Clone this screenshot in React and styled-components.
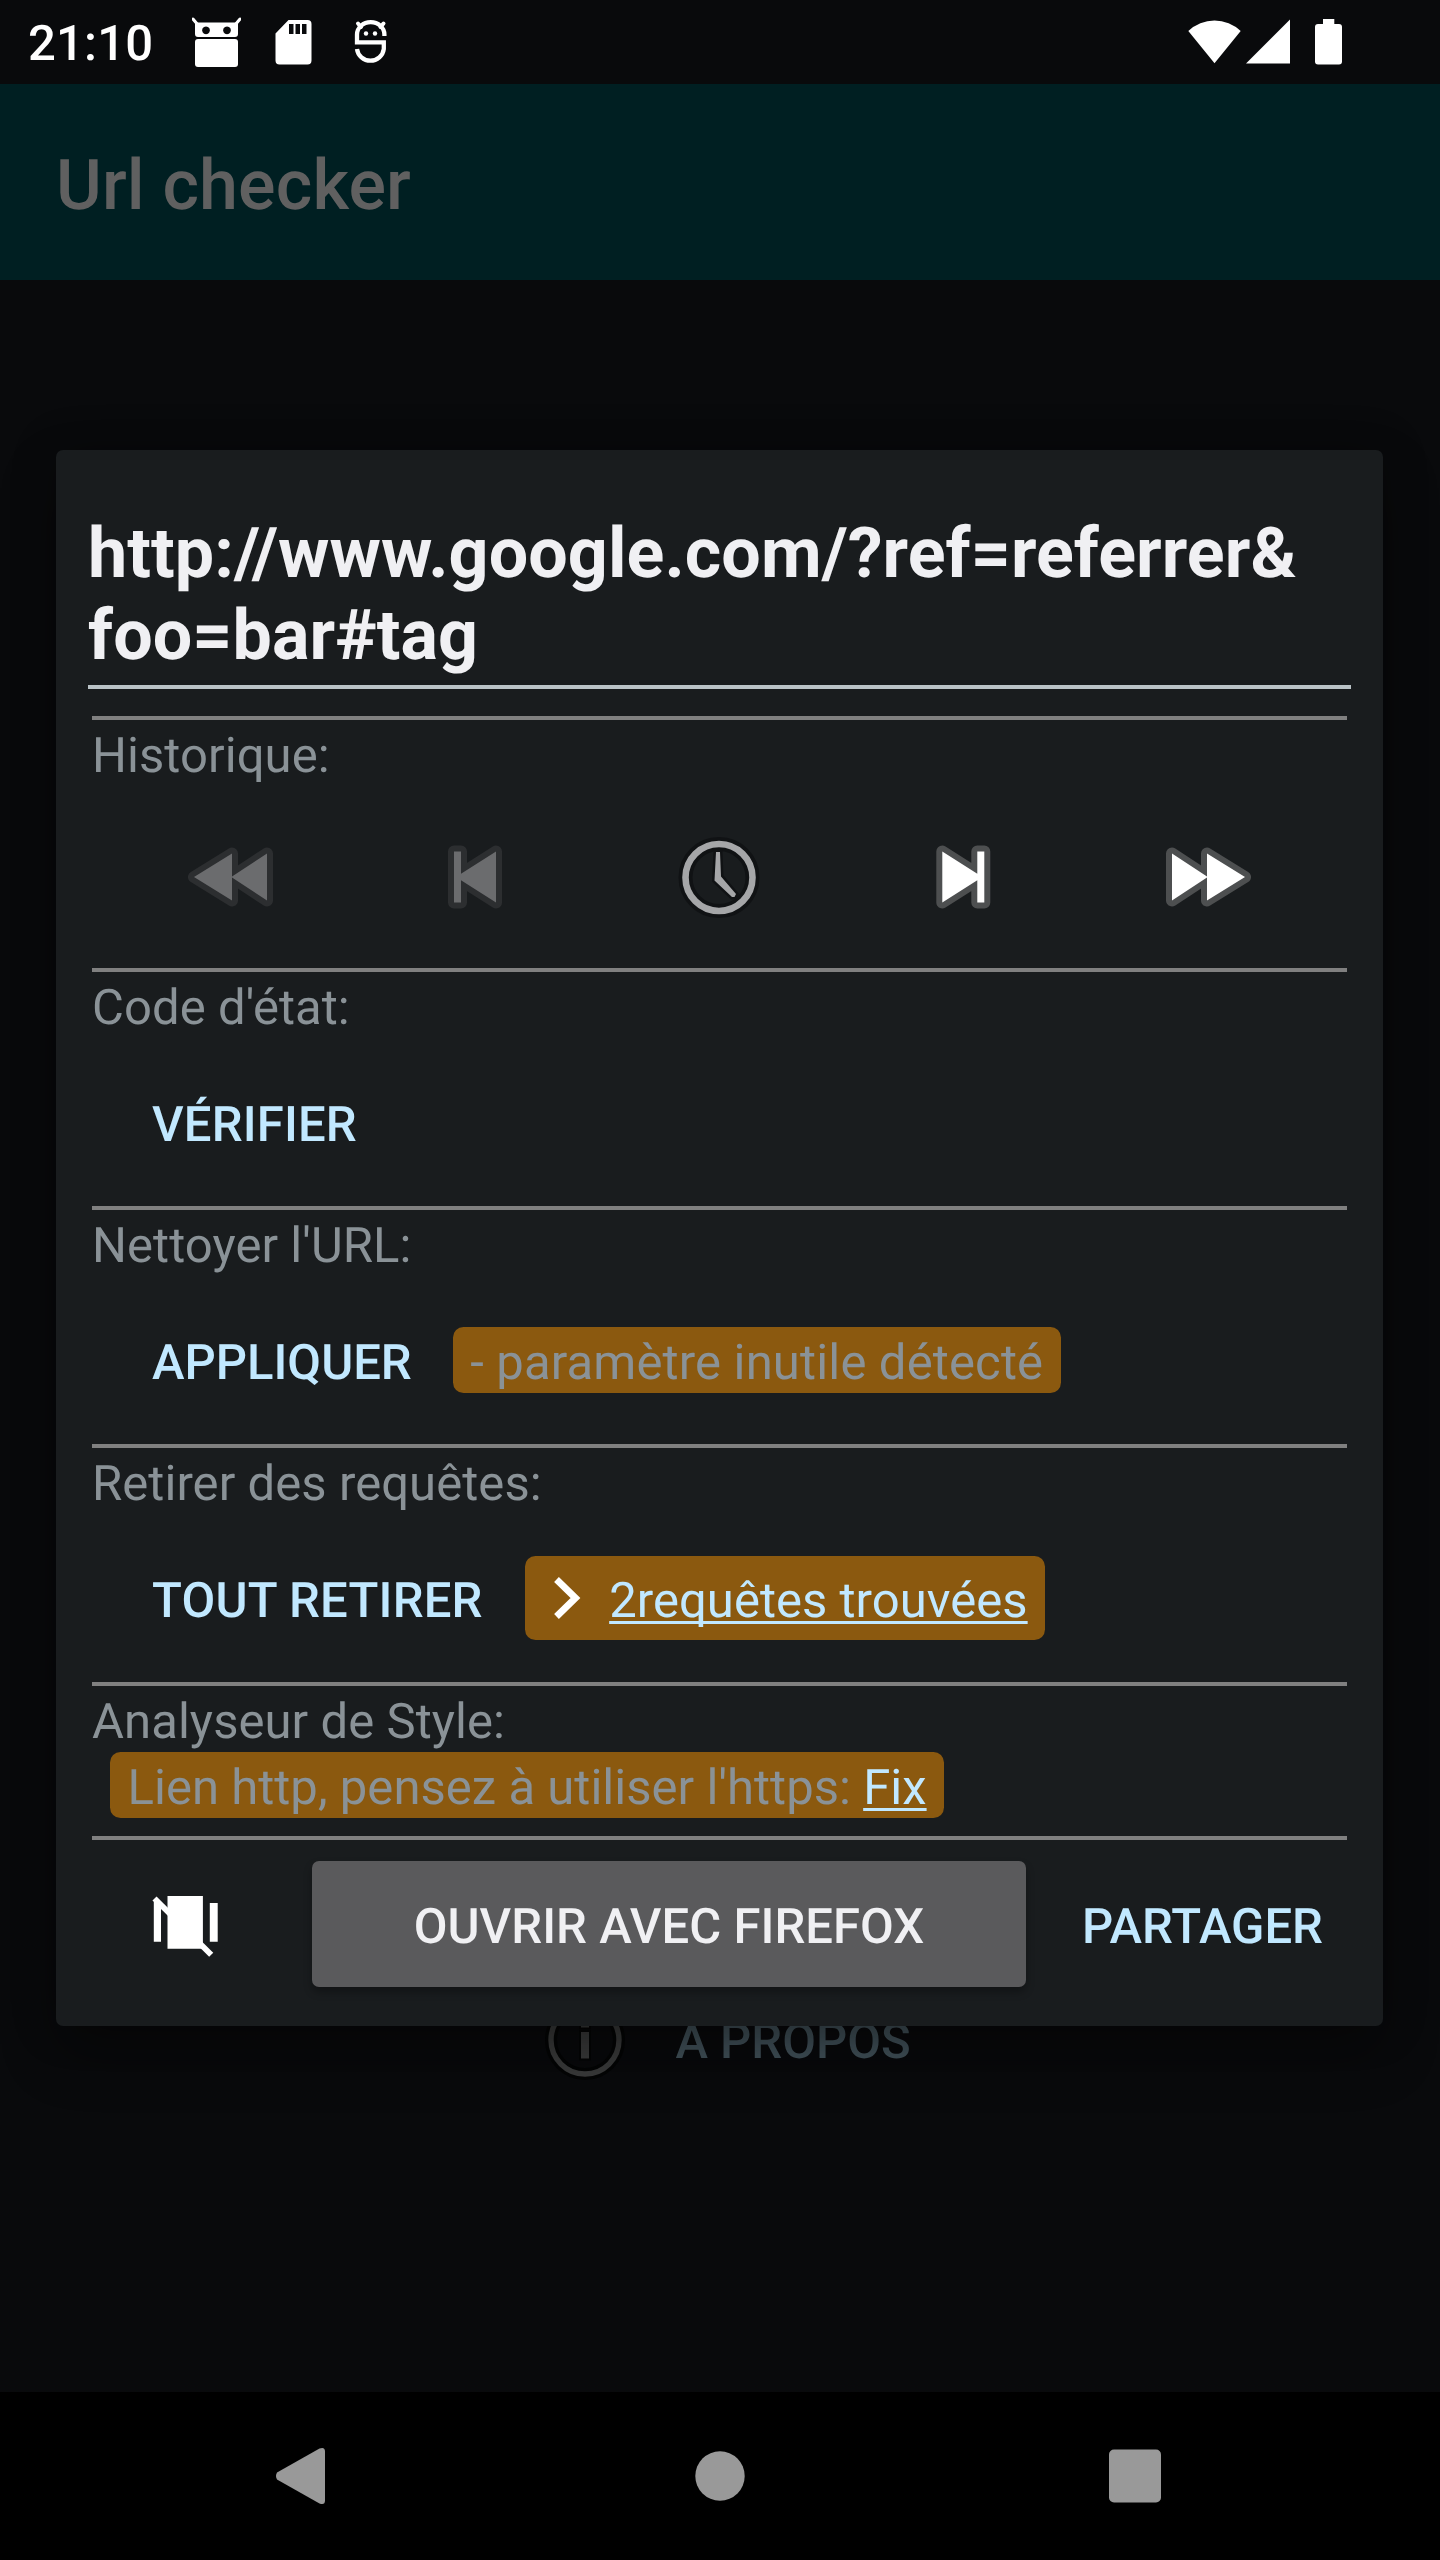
import React from "react";
import styled, { createGlobalStyle } from "styled-components";

const GlobalStyle = createGlobalStyle`
  * { box-sizing: border-box; }
  html, body { margin: 0; padding: 0; background: #090a0c; }
  body {
    font-family: Roboto, "Liberation Sans", sans-serif;
    font-size: 49px;
    line-height: 72px;
    text-rendering: geometricPrecision;
  }
`;

const Screen = styled.div`
  position: relative;
  display: flex;
  flex-direction: column;
  width: 1440px;
  height: 2560px;
  overflow: hidden;
  background: #090a0c;
`;

const StatusBar = styled.header`
  display: flex;
  align-items: center;
  justify-content: space-between;
  height: 84px;
  padding: 0 98px 0 28px;
  color: #fff;
`;

const StatusGroup = styled.div`
  display: flex;
  align-items: center;
`;

const Clock = styled.span`
  width: 164px;
  font-weight: 500;
  letter-spacing: 0.2px;
  line-height: 84px;
  padding-top: 4px;
`;

const Icon = styled.svg`
  display: block;
  flex: none;
  margin-left: ${(p) => p.$gap || 0}px;
`;

const AppBar = styled.div`
  display: flex;
  align-items: center;
  height: 196px;
  padding: 7px 56px 0;
  background: #001f22;
  color: #606060;
  font-size: 70px;
  font-weight: 500;
  letter-spacing: 0.15px;
`;

const Main = styled.main`
  display: flex;
  flex: 1;
  flex-direction: column;
  align-items: center;
  padding: 1718px 0 0 14px;
`;

const AboutRow = styled.div`
  display: flex;
  align-items: center;
  gap: 48px;
  height: 84px;
  color: #42525a;
  font-weight: 500;
`;

const AboutText = styled.span`
  padding-top: 4px;
`;

const NavBar = styled.nav`
  display: flex;
  align-items: center;
  justify-content: space-between;
  height: 168px;
  padding: 0 279px 0 276px;
  background: #000;
`;

const Dialog = styled.section`
  position: absolute;
  top: 450px;
  left: 56px;
  width: 1327px;
  height: 1576px;
  padding: 63px 36px 0;
  border-radius: 7px;
  background: #191c1e;
  box-shadow: 0 28px 56px rgba(0, 0, 0, 0.32), 0 0 44px rgba(0, 0, 0, 0.25);
`;

const UrlField = styled.div`
  height: 176px;
  margin: 0 -4px 27px;
  border-bottom: 4px solid #bac3c7;
  color: #f0f0f3;
  font-size: 70px;
  font-weight: 700;
  letter-spacing: 0.08px;
  line-height: 82px;
`;

const Module = styled.div`
  border-top: 4px solid #808080;
`;

const Label = styled.div`
  height: 66px;
  color: #8a9297;
  letter-spacing: 0.07px;
`;

const Row = styled.div`
  display: flex;
  align-items: center;
  height: ${(p) => p.$height || 168}px;
  padding: 0 ${(p) => p.$side || 0}px;
`;

const HistoryCell = styled.div`
  display: flex;
  flex: 1;
  align-items: center;
  justify-content: center;
`;

const TextButton = styled.button`
  height: 66px;
  padding: 0;
  margin: 0 ${(p) => p.$right || 0}px 0 ${(p) => p.$left || 0}px;
  border: 0;
  background: none;
  color: #c1e8ff;
  font: 500 49px/72px Roboto, "Liberation Sans", sans-serif;
  letter-spacing: ${(p) => p.$tracking || 0}px;
  text-rendering: inherit;
  white-space: nowrap;
`;

const Badge = styled.div`
  display: flex;
  align-items: center;
  width: max-content;
  height: ${(p) => p.$height || 66}px;
  margin-left: ${(p) => p.$left || 0}px;
  padding: 0 17.5px;
  border-radius: 10.5px;
  background: #8b590f;
  color: #8a9297;
  letter-spacing: ${(p) => p.$tracking || 0}px;
  white-space: pre;
`;

const BadgeText = styled.span`
  height: 66px;
`;

const Link = styled.a`
  color: #c1e8ff;
  text-decoration: underline;
  text-decoration-thickness: 3px;
  text-underline-offset: 4px;
  text-decoration-skip-ink: none;
`;

const AnalyserBody = styled.div`
  height: 84px;
`;

const OpenButton = styled.button`
  width: 714px;
  height: 126px;
  margin: 0 56px 0 94px;
  padding: 6px 0 0;
  border: 0;
  border-radius: 7px;
  background: #5a5a5c;
  box-shadow: 0 5px 9px rgba(0, 0, 0, 0.3);
  color: #f0f0f3;
  font: 500 49px/70px Roboto, "Liberation Sans", sans-serif;
  letter-spacing: 0.05px;
  text-rendering: inherit;
`;

const tones = {
  on: { fill: "#ffffff", edge: "#4d4f50" },
  off: { fill: "#6b6c6e", edge: "#2c2e30" },
};

function MediaIcon({ d, width, tone }) {
  return (
    <Icon width={width} height="66" viewBox={`${-width / 2} -33 ${width} 66`}>
      <path d={d} fill={tone.edge} stroke={tone.edge} strokeWidth="12" strokeLinejoin="round" />
      <path d={d} fill={tone.fill} />
    </Icon>
  );
}

const DOUBLE_NEXT = "M-36 -23.5L-1 -.6V-23.5L37 0L-1 23.5V.6L-36 23.5Z";
const DOUBLE_PREV = "M36 -23.5L1 -.6V-23.5L-37 0L1 23.5V.6L36 23.5Z";
const NEXT = "M-21.7 -25.5L13.3 -3.3V-25.5H20.3V25.5H13.3V3.3L-21.7 25.5Z";
const PREV = "M21 -25.5L-14 -3.3V-25.5H-21V25.5H-14V3.3L21 25.5Z";

function HistoryClock() {
  return (
    <Icon width="84" height="84" viewBox="-41 -42.5 84 84">
      <circle r="33.5" fill="none" stroke="#101214" strokeWidth="14" />
      <circle r="33.5" fill="none" stroke="#a5a6a8" strokeWidth="6.6" />
      <path
        d="M-3 -25.5H1L2 -1L17 16.5L15.5 19.5H13L-4.5 3Z"
        fill="#a5a6a8"
        stroke="#101214"
        strokeWidth="5"
        paintOrder="stroke"
      />
    </Icon>
  );
}

export default function App() {
  return (
    <>
      <GlobalStyle />
      <Screen>
        <StatusBar>
          <StatusGroup>
            <Clock>21:10</Clock>
            <Icon width="49" height="84" viewBox="192 0 49 84">
              <path d="M193 19L198 25M240 19L235 25" stroke="#fff" strokeWidth="3" strokeLinecap="round" />
              <path
                fill="#fff"
                fillRule="evenodd"
                d="M195 22.5H238V34Q238 37 235 37H198Q195 37 195 34ZM206 26.4a3.9 3.9 0 1 0 .01 0ZM227 26.4a3.9 3.9 0 1 0 .01 0Z"
              />
              <rect x="195" y="39" width="43" height="28" rx="3" fill="#fff" />
            </Icon>
            <Icon $gap={34} width="37" height="84" viewBox="275 0 37 84">
              <path
                fill="#fff"
                fillRule="evenodd"
                d="M288.5 20H307.5Q311.5 20 311.5 24V60.5Q311.5 64.5 307.5 64.5H279.5Q275.5 64.5 275.5 60.5V33.5ZM289 24V34H293.5V24ZM295.5 24V34H300V24ZM302 24V34H306.5V24Z"
              />
            </Icon>
            <Icon $gap={41} width="35" height="84" viewBox="353 0 35 84">
              <path
                d="M384.4 36V34.5A13.7 12.4 0 0 0 357 34.5V42.3H383.8V49A13.5 13.3 0 0 1 357 49"
                fill="none"
                stroke="#fff"
                strokeWidth="4.3"
              />
              <path d="M358 23.5L361 27M383.5 23.5L380.5 27" stroke="#fff" strokeWidth="4" strokeLinecap="round" />
              <circle cx="366" cy="33.5" r="2.2" fill="#fff" />
              <circle cx="375" cy="33.5" r="2.2" fill="#fff" />
            </Icon>
          </StatusGroup>
          <StatusGroup>
            <Icon width="53" height="84" viewBox="1188 0 53 84" fill="#fff">
              <path d="M1214.5 63.3L1188.3 31A38 38 0 0 1 1240.7 31Z" />
            </Icon>
            <Icon $gap={5} width="44" height="84" viewBox="1246 0 44 84" fill="#fff">
              <path d="M1246 63.5L1290 19.5V63.5Z" />
            </Icon>
            <Icon $gap={25} width="27" height="84" viewBox="1315 0 27 84" fill="#fff">
              <rect x="1315" y="24" width="27" height="40.5" rx="3" />
              <rect x="1323" y="19" width="11.3" height="6" />
            </Icon>
          </StatusGroup>
        </StatusBar>
        <AppBar>Url checker</AppBar>
        <Main>
          <AboutRow>
            <Icon width="84" height="84" viewBox="-42 -42 84 84">
              <circle r="34" fill="none" stroke="#040505" strokeWidth="12" />
              <circle r="34" fill="none" stroke="#3a3b3b" strokeWidth="5.4" />
              <path d="M-4 -8H4V18.5H-4ZM-4 -20H4V-12.5H-4Z" fill="#3a3b3b" stroke="#040505" strokeWidth="4" paintOrder="stroke" />
            </Icon>
            <AboutText>À PROPOS</AboutText>
          </AboutRow>
        </Main>
        <NavBar>
          <Icon width="55" height="58" viewBox="276 2447 55 58">
            <path d="M277 2472.5L319.5 2448.5Q325 2446.5 325 2451.5V2500.5Q325 2505.5 319.5 2503.5L277 2479.5Q275 2476 277 2472.5Z" fill="#999" />
          </Icon>
          <Icon width="50" height="50" viewBox="-25 -25 50 50">
            <circle r="24.7" fill="#999" />
          </Icon>
          <Icon width="52" height="54" viewBox="0 0 52 54">
            <rect y="0.5" width="52" height="53" rx="5" fill="#999" />
          </Icon>
        </NavBar>

        <Dialog>
          <UrlField>
            http://www.google.com/?ref=referrer&amp;
            <br />
            foo=bar#tag
          </UrlField>

          <Module>
            <Label>Historique:</Label>
            <Row $height={182} $side={17}>
              <HistoryCell><MediaIcon d={DOUBLE_PREV} width={86} tone={tones.off} /></HistoryCell>
              <HistoryCell><MediaIcon d={PREV} width={56} tone={tones.off} /></HistoryCell>
              <HistoryCell><HistoryClock /></HistoryCell>
              <HistoryCell><MediaIcon d={NEXT} width={56} tone={tones.on} /></HistoryCell>
              <HistoryCell><MediaIcon d={DOUBLE_NEXT} width={86} tone={tones.on} /></HistoryCell>
            </Row>
          </Module>

          <Module>
            <Label>Code d'état:</Label>
            <Row>
              <TextButton $left={60} $tracking={0.18}>VÉRIFIER</TextButton>
            </Row>
          </Module>

          <Module>
            <Label>Nettoyer l'URL:</Label>
            <Row>
              <TextButton $left={60} $right={41}>APPLIQUER</TextButton>
              <Badge $tracking={0.16}><BadgeText>- paramètre inutile détecté</BadgeText></Badge>
            </Row>
          </Module>

          <Module>
            <Label>Retirer des requêtes:</Label>
            <Row>
              <TextButton $left={60} $right={42} $tracking={0.22}>TOUT RETIRER</TextButton>
              <Badge $height={84} $tracking={0.04}>
                <Icon $gap={12} width="55" height="84" viewBox="555 1556 55 84">
                  <path d="M557.5 1579.5L576.5 1598L557.5 1616.5" fill="none" stroke="#fff" strokeWidth="6.8" />
                </Icon>
                <BadgeText><Link>2requêtes trouvées</Link></BadgeText>
              </Badge>
            </Row>
          </Module>

          <Module>
            <Label>Analyseur de Style:</Label>
            <AnalyserBody>
              <Badge $left={18} $tracking={0.04}>
                <BadgeText>Lien http, pensez à utiliser l'https: <Link>Fix</Link></BadgeText>
              </Badge>
            </AnalyserBody>
          </Module>

          <Module>
            <Row>
              <Icon $gap={60} width="66" height="84" viewBox="152.5 1882 66 84">
                <path d="M154.3 1902H161.5V1941.7H154.3ZM168 1896H203.4V1948.7H168ZM210.3 1903H218.2V1941.7H210.3Z" fill="#fff" />
                <path d="M155 1898.5L211.7 1954.8" stroke="#fff" strokeWidth="5.8" />
              </Icon>
              <OpenButton>OUVRIR AVEC FIREFOX</OpenButton>
              <TextButton>PARTAGER</TextButton>
            </Row>
          </Module>
        </Dialog>
      </Screen>
    </>
  );
}
